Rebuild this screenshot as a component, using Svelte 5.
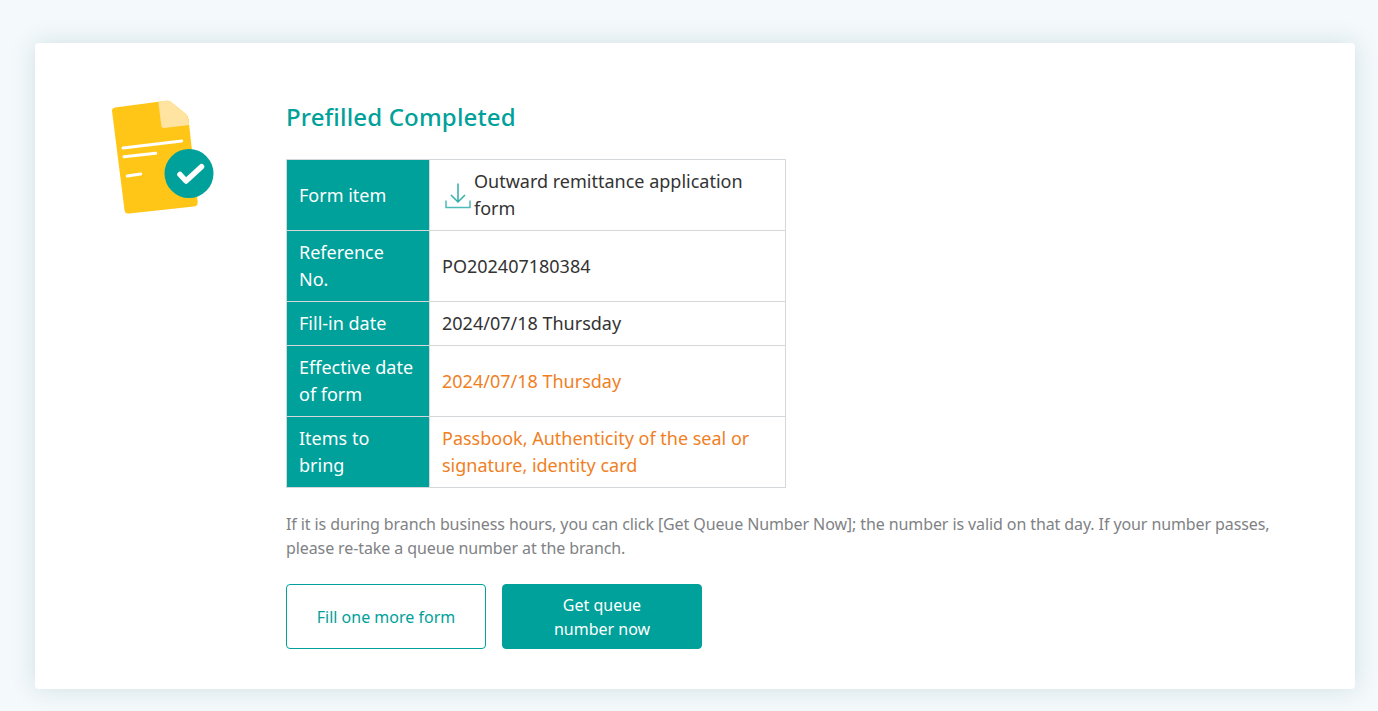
<script lang="ts">
  const rows = [
    { label: 'Reference No.', value: 'PO202407180384' },
    { label: 'Fill-in date', value: '2024/07/18 Thursday' },
    { label: 'Effective date of form', value: '2024/07/18 Thursday', warn: true },
    { label: 'Items to bring', value: 'Passbook, Authenticity of the seal or signature, identity card', warn: true }
  ];
</script>

<div class="page">
  <div class="card">
    <div class="side">
      <svg class="doc" width="104" height="116" viewBox="0 0 104 116" fill="none">
        <path d="M4 8.500 55 1.800Q58 1.500 60 3L75 15Q77 17 77.500 20L86.700 103Q87 107 83 107.500L18 114.500Q14 115 13.500 111L1 12Q.8 9 4 8.500Z" fill="#ffc617" />
        <path d="M47.300 2.700 55 1.800Q58 1.500 60 3L75 15Q77 17 78 26L53 29Q50.700 29.300 50.400 27Z" fill="#ffe3a0" />
        <path d="M12 49 70.700 42M13 57.700 44.700 54.300M16.300 77 29.700 75" stroke="#fff" stroke-width="3" stroke-linecap="round" />
        <circle cx="78" cy="74.500" r="24.500" fill="#00a19a" />
        <path d="M69 75.500 75 82 90.500 67.700" stroke="#fff" stroke-width="5.500" stroke-linecap="round" stroke-linejoin="round" />
      </svg>
    </div>
    <div class="main">
      <h2>Prefilled Completed</h2>
      <table>
        <tbody>
          <tr>
            <th>Form item</th>
            <td>
              <div class="download">
                <svg width="26" height="27" viewBox="0 0 26 27" fill="none" stroke="#4cbcb6" stroke-width="1.500">
                  <path d="M13 1.500V20M6 13 13 20 20 13" stroke="#2fb0a9" />
                  <path d="M1 18.500V25.500H25V18.500" />
                </svg>
                <span>Outward remittance application form</span>
              </div>
            </td>
          </tr>
          {#each rows as row}
            <tr>
              <th>{row.label}</th>
              <td class:warn={row.warn}>{row.value}</td>
            </tr>
          {/each}
        </tbody>
      </table>
      <p>If it is during branch business hours, you can click [Get Queue Number Now]; the number is valid on that day. If your number passes, please re-take a queue number at the branch.</p>
      <div class="actions">
        <button class="outline">Fill one more form</button>
        <button class="solid">Get queue<br />number now</button>
      </div>
    </div>
  </div>
</div>

<style>
  :global(body) {
    background: #f4f9fb;
    font-family: 'Noto Sans', 'Open Sans', sans-serif;
  }

  .page {
    padding: 43px 23px 22px 35px;
  }

  .card {
    display: flex;
    background: #fff;
    border-radius: 4px;
    height: 646px;
    box-sizing: border-box;
    padding: 56px 70px 0 0;
    box-shadow: 0 0 24px rgba(0, 90, 100, 0.15);
  }

  .side {
    width: 251px;
    flex: none;
    padding-left: 76px;
    box-sizing: border-box;
  }

  .doc {
    display: block;
    overflow: visible;
  }

  .main {
    flex: 1;
  }

  h2 {
    margin: 0 0 24px;
    color: #00a19a;
    font-size: 24px;
    font-weight: 500;
    line-height: 36px;
    letter-spacing: 0.17px;
  }

  table {
    width: 500px;
    border-collapse: collapse;
    font-size: 18px;
    line-height: 27px;
  }

  th {
    width: 143px;
    box-sizing: border-box;
    background: #00a19a;
    color: #fff;
    font-weight: 400;
    text-align: left;
    padding: 8px 12px;
    border: 1px solid #d5d8da;
  }

  td {
    padding: 8px 12px;
    color: #333;
    border: 1px solid #d5d8da;
  }

  td.warn {
    color: #f07f1f;
  }

  .download {
    display: flex;
    align-items: center;
    gap: 3px;
  }

  .download svg {
    flex: none;
    margin-left: 3px;
  }

  p {
    margin: 24px 0;
    color: #808285;
    font-size: 16px;
    line-height: 24px;
    letter-spacing: -0.1px;
  }

  .actions {
    display: flex;
    gap: 16px;
  }

  button {
    width: 200px;
    height: 65px;
    box-sizing: border-box;
    border-radius: 4px;
    font: inherit;
    font-size: 16px;
    line-height: 24px;
    padding: 0 16px;
  }

  .outline {
    background: #fff;
    border: 1px solid #00a19a;
    color: #00a19a;
  }

  .solid {
    background: #00a19a;
    border: 1px solid #00a19a;
    color: #fff;
  }
</style>
